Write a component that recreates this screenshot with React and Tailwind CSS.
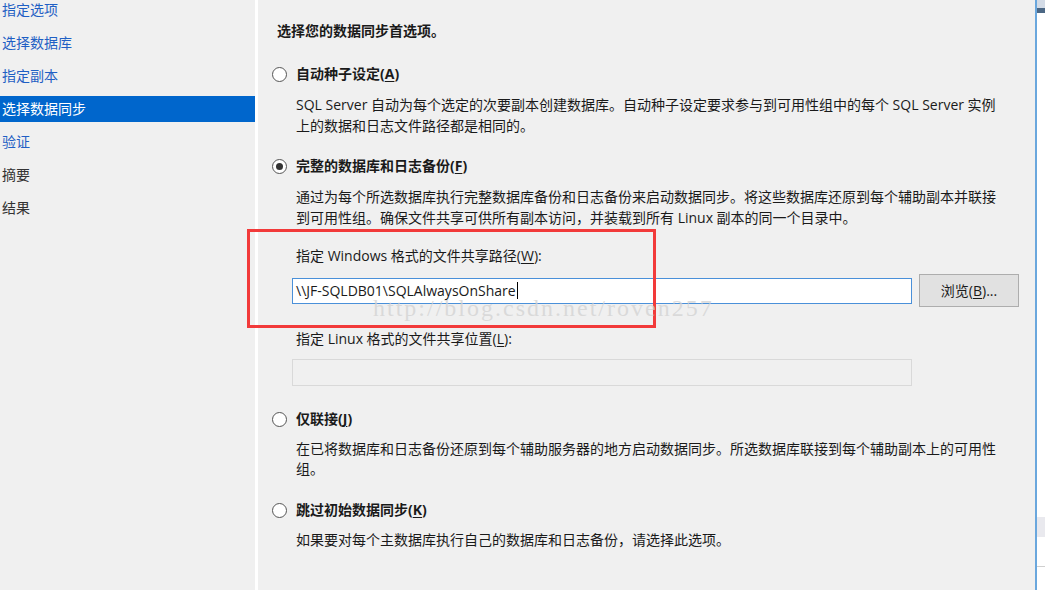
import React from "react";

const FONT = { fontFamily: '"Open Sans","Noto Sans CJK SC",sans-serif' };

function U({ children }) {
  return <span className="underline underline-offset-2">{children}</span>;
}

function Radio({ checked }) {
  return (
    <span className="flex h-[15px] w-[15px] shrink-0 items-center justify-center rounded-full border border-[#555] bg-white">
      {checked && <span className="h-[7px] w-[7px] rounded-full bg-[#333]" />}
    </span>
  );
}

function RadioRow({ checked, label, mt }) {
  return (
    <div className={`flex h-[20px] items-center gap-[9px] ${mt}`}>
      <Radio checked={checked} />
      <span className="whitespace-nowrap text-[14px] font-bold leading-[20px] text-[#1a1a1a]">{label}</span>
    </div>
  );
}

const navItems = [
  { t: "指定选项", c: "text-[#1f5fc4]" },
  { t: "选择数据库", c: "text-[#1f5fc4]" },
  { t: "指定副本", c: "text-[#1f5fc4]" },
  { t: "选择数据同步", c: "text-white bg-[#0066cc]" },
  { t: "验证", c: "text-[#1f5fc4]" },
  { t: "摘要", c: "text-[#333]" },
  { t: "结果", c: "text-[#333]" },
];

export default function App() {
  return (
    <div className="relative h-[607px] w-[1045px] overflow-hidden bg-white" style={FONT}>
      <div className="flex h-[590px] w-full">
        {/* Nav */}
        <div className="h-full w-[255px] shrink-0 bg-[#f0f0f0]">
          <div className="-mt-[3px] flex flex-col gap-[7px]">
            {navItems.map((n) => (
              <div key={n.t} className={`h-[26px] pl-[2px] text-[14px] leading-[26px] ${n.c}`}>
                {n.t}
              </div>
            ))}
          </div>
        </div>
        <div className="w-[3px] shrink-0 bg-white" />
        {/* Content */}
        <div className="h-full w-[777px] shrink-0 bg-[#f0f0f0] pl-[14px] pt-[21px] text-[14px] text-[#1a1a1a]">
          <div className="ml-[5px] h-[20px] whitespace-nowrap font-bold leading-[20px]">选择您的数据同步首选项。</div>

          <RadioRow label={<>自动种子设定(<U>A</U>)</>} mt="mt-[23px]" />
          <div className="ml-[24px] mt-[10px] whitespace-nowrap leading-[21px]">
            SQL Server 自动为每个选定的次要副本创建数据库。自动种子设定要求参与到可用性组中的每个 SQL Server 实例
            <br />
            上的数据和日志文件路径都是相同的。
          </div>

          <RadioRow checked label={<>完整的数据库和日志备份(<U>F</U>)</>} mt="mt-[20px]" />
          <div className="ml-[24px] mt-[10px] whitespace-nowrap leading-[21px]">
            通过为每个所选数据库执行完整数据库备份和日志备份来启动数据同步。将这些数据库还原到每个辅助副本并联接
            <br />
            到可用性组。确保文件共享可供所有副本访问，并装载到所有 Linux 副本的同一个目录中。
          </div>

          <div className="ml-[24px] mt-[18px] h-[20px] whitespace-nowrap leading-[20px]">
            指定 Windows 格式的文件共享路径(<U>W</U>):
          </div>
          <div className="ml-[20px] mt-[8px] flex h-[33px] items-center gap-[7px]">
            <div className="flex h-[26px] w-[620px] items-center border border-[#4a90d9] bg-white pl-[3px] leading-[20px]">
              <span className="whitespace-nowrap">\\JF-SQLDB01\SQLAlwaysOnShare</span>
              <span className="ml-[1px] h-[17px] w-[1px] bg-black" />
            </div>
            <div className="flex h-[33px] w-[100px] items-center justify-center border border-[#adadad] bg-[#e1e1e1]">
              浏览(<U>B</U>)...
            </div>
          </div>

          <div className="ml-[24px] mt-[22px] h-[20px] whitespace-nowrap leading-[20px]">
            指定 Linux 格式的文件共享位置(<U>L</U>):
          </div>
          <div className="ml-[20px] mt-[10px] h-[27px] w-[620px] border border-[#d9d9d9] bg-[#f0f0f0]" />

          <RadioRow label={<>仅联接(<U>J</U>)</>} mt="mt-[23px]" />
          <div className="ml-[24px] mt-[10px] whitespace-nowrap leading-[20px]">
            在已将数据库和日志备份还原到每个辅助服务器的地方启动数据同步。所选数据库联接到每个辅助副本上的可用性
            <br />
            组。
          </div>

          <RadioRow label={<>跳过初始数据同步(<U>K</U>)</>} mt="mt-[21px]" />
          <div className="ml-[24px] mt-[10px] whitespace-nowrap leading-[20px]">
            如果要对每个主数据库执行自己的数据库和日志备份，请选择此选项。
          </div>
        </div>
        <div className="w-[2px] shrink-0 bg-[#6aa7dd]" />
        <div className="flex flex-1 flex-col bg-white">
          <div className="h-[8px] bg-[#d3dbe6]" />
          <div className="h-[5px] bg-[#4b6784]" />
          <div className="mt-[504px] h-[20px] bg-[#e9e9ee]" />
          <div className="mt-[29px] h-[1px] bg-[#cfcfcf]" />
        </div>
      </div>

      {/* Annotation rectangle */}
      <div className="pointer-events-none absolute left-[247px] top-[229px] h-[99px] w-[409px] border-[3px] border-[#f23a3a]" />
      {/* Watermark */}
      <div
        className="pointer-events-none absolute left-[373px] top-[294px] whitespace-nowrap text-[24px] leading-[28px] tracking-[2px] text-[#d2d2d2]/75"
        style={{ fontFamily: '"Liberation Serif",serif' }}
      >
        http://blog.csdn.net/roven257
      </div>
    </div>
  );
}
